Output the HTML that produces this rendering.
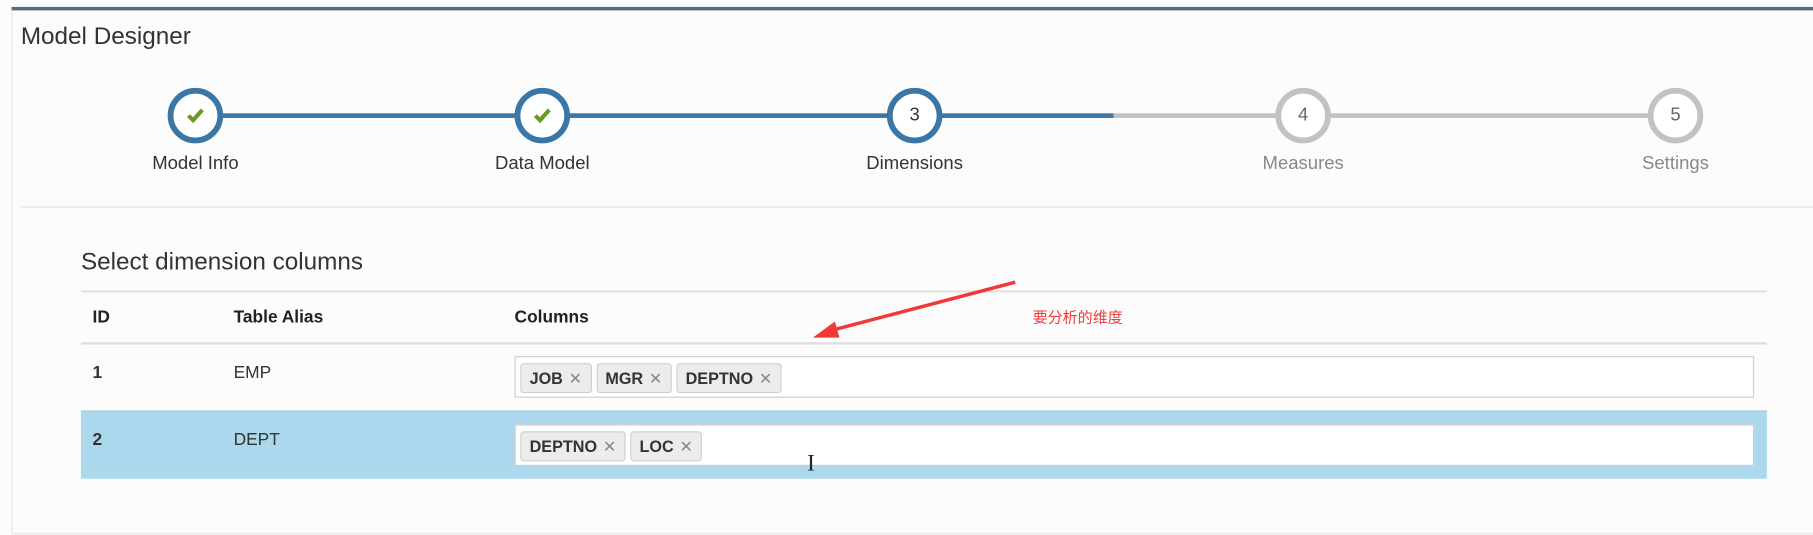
<!DOCTYPE html>
<html><head><meta charset="utf-8"><style>
html,body{margin:0;padding:0;width:1813px;height:535px;overflow:hidden;background:#fff;}
#w{position:absolute;left:0;top:0;width:1568px;height:463px;transform:scale(1.1563);transform-origin:0 0;font-family:"Liberation Sans","Noto Sans CJK SC",sans-serif;color:#333;}
.a{position:absolute;}
.c{position:absolute;width:48px;height:48px;border-radius:50%;box-sizing:border-box;border:5px solid #3a76a6;background:#fff;top:76px;text-align:center;line-height:38px;font-size:16px;color:#333;}
.c.g{border-color:#c0c2c6;color:#666;}
.lbl{position:absolute;top:133px;font-size:16px;width:160px;text-align:center;}
.tag{display:inline-block;background:#ececec;border:1px solid #cfcfcf;border-radius:3px;height:24px;line-height:24px;padding:0 7px;margin-right:4px;font-size:14px;font-weight:bold;color:#333;}
.tag span{color:#888;font-weight:normal;margin-left:5px;}
.inp{position:absolute;left:445px;width:1072px;height:36px;border:1px solid #ccc;background:#fff;box-sizing:border-box;padding:5px 4px;}
.th{position:absolute;top:266px;font-size:15px;font-weight:bold;color:#222;}
</style></head><body><div id="w">
<div class="a" style="left:0;top:0;width:1568px;height:463px;background:#fcfcfc"></div>
<div class="a" style="left:10px;top:6px;width:1558px;height:3px;background:#4f6e85"></div>
<div class="a" style="left:10px;top:9px;width:1px;height:452px;background:#e6e6e6"></div>
<div class="a" style="left:10px;top:461px;width:1558px;height:1px;background:#e6e6e6"></div>
<div class="a" style="left:18px;top:20px;font-size:21px;color:#333">Model Designer</div>
<div class="a" style="left:169px;top:98px;width:794px;height:4px;background:#3a76a6"></div>
<div class="a" style="left:963px;top:98px;width:486px;height:4px;background:#c0c2c6"></div>
<div class="c" style="left:145px"><svg width="20" height="20" viewBox="0 0 20 20" style="margin-top:9px"><path d="M4 10l4 4 8-9" stroke="#6a9a1f" stroke-width="3.5" fill="none"/></svg></div>
<div class="c" style="left:445px"><svg width="20" height="20" viewBox="0 0 20 20" style="margin-top:9px"><path d="M4 10l4 4 8-9" stroke="#6a9a1f" stroke-width="3.5" fill="none"/></svg></div>
<div class="c" style="left:767px">3</div>
<div class="c g" style="left:1103px">4</div>
<div class="c g" style="left:1425px">5</div>
<div class="lbl" style="left:89px">Model Info</div>
<div class="lbl" style="left:389px">Data Model</div>
<div class="lbl" style="left:711px">Dimensions</div>
<div class="lbl" style="left:1047px;color:#888">Measures</div>
<div class="lbl" style="left:1369px;color:#888">Settings</div>
<div class="a" style="left:18px;top:178px;width:1550px;height:2px;background:#ececec"></div>
<div class="a" style="left:70px;top:215px;font-size:21px;color:#333">Select dimension columns</div>
<div class="a" style="left:70px;top:251px;width:1458px;height:2px;background:#e2e2e2"></div>
<div class="th" style="left:80px">ID</div>
<div class="th" style="left:202px">Table Alias</div>
<div class="th" style="left:445px">Columns</div>
<div class="a" style="left:70px;top:296px;width:1458px;height:2px;background:#ddd"></div>
<div class="a" style="left:80px;top:314px;font-size:15px;font-weight:bold">1</div>
<div class="a" style="left:202px;top:314px;font-size:15px">EMP</div>
<div class="inp" style="top:308px"><span class="tag">JOB<span>✕</span></span><span class="tag">MGR<span>✕</span></span><span class="tag">DEPTNO<span>✕</span></span></div>
<div class="a" style="left:70px;top:355px;width:1458px;height:58px;background:#acd8ee;border-top:1px solid #a0c8dc"></div>
<div class="a" style="left:80px;top:372px;font-size:15px;font-weight:bold">2</div>
<div class="a" style="left:202px;top:372px;font-size:15px">DEPT</div>
<div class="inp" style="top:367px"><span class="tag">DEPTNO<span>✕</span></span><span class="tag">LOC<span>✕</span></span></div>
<div class="a" style="left:698px;top:390px;font-size:20px;font-family:'Liberation Serif',serif;color:#222">I</div>
<svg class="a" style="left:0;top:0" width="1568" height="463"><path d="M878 244 L718 286" stroke="#f03a3a" stroke-width="3"/><path d="M703 292 L722 278 L726 292 Z" fill="#f03a3a"/></svg>
<div class="a" style="left:893px;top:264px;font-size:13px;color:#f03a3a">要分析的维度</div>
</div></body></html>
